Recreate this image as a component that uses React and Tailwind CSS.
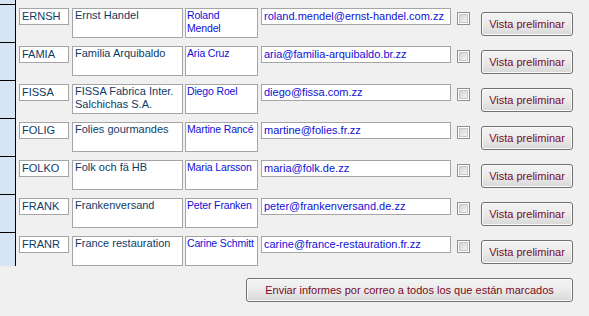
import React from 'react';

const rows = [
  { id: '', company: '', contact: [''], email: '', blank: true },
  { id: 'ERNSH', company: 'Ernst Handel', contact: ['Roland', 'Mendel'], email: 'roland.mendel@ernst-handel.com.zz' },
  { id: 'FAMIA', company: 'Familia Arquibaldo', contact: ['Aria Cruz'], email: 'aria@familia-arquibaldo.br.zz' },
  { id: 'FISSA', company: 'FISSA Fabrica Inter. Salchichas S.A.', contact: ['Diego Roel'], email: 'diego@fissa.com.zz' },
  { id: 'FOLIG', company: 'Folies gourmandes', contact: ['Martine Rancé'], email: 'martine@folies.fr.zz' },
  { id: 'FOLKO', company: 'Folk och fä HB', contact: ['Maria Larsson'], email: 'maria@folk.de.zz' },
  { id: 'FRANK', company: 'Frankenversand', contact: ['Peter Franken'], email: 'peter@frankenversand.de.zz' },
  { id: 'FRANR', company: 'France restauration', contact: ['Carine Schmitt'], email: 'carine@france-restauration.fr.zz' },
];

function Checkbox() {
  return (
    <div className="w-[13px] h-[13px] border border-[#8e8f8f] bg-white p-[1px]">
      <div className="w-full h-full bg-gradient-to-br from-[#d4d4d4] to-[#f4f4f4] border border-[#c8c8c8]" />
    </div>
  );
}

function Button({ children, className = '' }) {
  return (
    <button
      className={`h-[24px] border border-[#707070] rounded-[3px] bg-gradient-to-b from-[#f3f3f3] via-[#ebebeb] to-[#d7d7d7] text-[#7a0a26] text-[11px] leading-none shadow-[inset_0_0_0_1px_#fcfcfc] ${className}`}
    >
      {children}
    </button>
  );
}

function Row({ r, last }) {
  return (
    <div className={`flex ${last ? 'h-[34px]' : 'h-[38px]'}`}>
      <div className="w-[16px] shrink-0 bg-[#d7e4f3] border-r border-t border-black" />
      <div className="flex pt-[4px] pl-[3px]">
        <div className="w-[50px] h-[17px] border border-[#a5a5a5] bg-white px-[2px] text-[#0e3b66] leading-[14px]">
          {r.id}
        </div>
        <div className="ml-[3px] w-[111px] h-[30px] border border-[#a5a5a5] bg-white px-[2px] text-[#0e3b66] leading-[13px]">
          {r.company}
        </div>
        <div className="ml-[2px] w-[73px] h-[30px] border border-[#a5a5a5] bg-white pl-[1px] text-[#1010d8] text-[10.5px] leading-[13px] whitespace-nowrap overflow-hidden tracking-[-0.15px]">
          {r.contact.map((c, i) => (
            <div key={i}>{c}</div>
          ))}
        </div>
        <div className="ml-[3px] w-[190px] h-[17px] border border-[#a5a5a5] bg-white px-[2px] text-[#1010d8] leading-[14px] whitespace-nowrap overflow-hidden">
          {r.email}
        </div>
        {!r.blank && (
          <>
            <div className="ml-[6px] mt-[4px]">
              <Checkbox />
            </div>
            <div className="ml-[11px] mt-[4px]">
              <Button className="w-[92px]">Vista preliminar</Button>
            </div>
          </>
        )}
      </div>
    </div>
  );
}

export default function App() {
  return (
    <div
      className="w-[589px] h-[316px] overflow-hidden bg-[#f0f0f0] text-[11px]"
      style={{ fontFamily: '"Liberation Sans", Arial, sans-serif' }}
    >
      <div className="-mt-[34px]">
        {rows.map((r, i) => (
          <Row key={i} r={r} last={i === rows.length - 1} />
        ))}
      </div>
      <div className="flex justify-end pr-[16px] pt-[12px]">
        <Button className="w-[327px]">Enviar informes por correo a todos los que están marcados</Button>
      </div>
    </div>
  );
}
